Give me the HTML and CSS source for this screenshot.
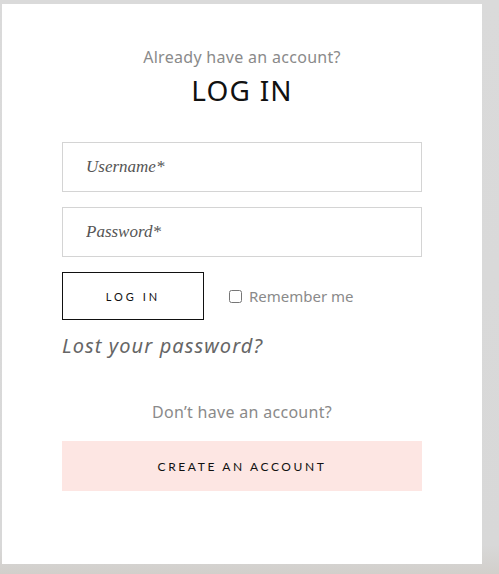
FILE: index.html
```html
<!DOCTYPE html>
<html lang="en">
<head>
    <meta charset="UTF-8">
    <meta name="viewport" content="width=device-width, initial-scale=1.0">
    <title>Log in</title>
    <link rel="stylesheet" href="styles.css">
</head>
<body>

    <div class="backdrop">
        <div class="modal">
            <p class="lead">Already have an account?</p>
            <h1 class="title">LOG IN</h1>

            <form class="login-form">
                <input type="text" class="field" placeholder="Username*">
                <input type="password" class="field" placeholder="Password*">

                <div class="actions">
                    <button type="button" class="btn-outline">LOG IN</button>
                    <label class="remember">
                        <input type="checkbox" class="check">
                        <span>Remember me</span>
                    </label>
                </div>

                <a href="#" class="lost">Lost your password?</a>
            </form>

            <p class="lead lead-bottom">Don’t have an account?</p>
            <button type="button" class="btn-pink">CREATE AN ACCOUNT</button>
        </div>
    </div>

</body>
</html>
```

FILE: styles.css
```css
/* General Styling */
body {
    margin: 0;
    font-family: 'Noto Sans', sans-serif;
    background: #d9d9d9;
}

.backdrop {
    min-height: 574px;
    padding: 4px 0 0 2px;
    box-sizing: border-box;
    background: linear-gradient(180deg, #dadada 0%, #d8d8d8 95%, #d2cfcb 100%);
}

.modal {
    width: 480px;
    height: 560px;
    box-sizing: border-box;
    padding: 43px 60px 0;
    background: #fff;
    display: flex;
    flex-direction: column;
}

/* Headings */
.lead {
    margin: 0;
    text-align: center;
    font-size: 16px;
    line-height: 20px;
    letter-spacing: 0.3px;
    color: #8a8a8a;
}

.title {
    margin: 6px 0 0;
    text-align: center;
    font-size: 28px;
    line-height: 34px;
    font-weight: 400;
    letter-spacing: 1.2px;
    color: #111;
}

/* Form */
.login-form {
    margin-top: 35px;
    display: flex;
    flex-direction: column;
    gap: 15px;
}

.field {
    height: 50px;
    box-sizing: border-box;
    border: 1px solid #d4d4d4;
    padding: 0 23px;
    font-family: 'Liberation Serif', serif;
    font-style: italic;
    font-size: 17px;
    outline: none;
}

.field::placeholder {
    color: #555;
}

.actions {
    display: flex;
    align-items: center;
    gap: 25px;
}

.btn-outline {
    width: 142px;
    height: 48px;
    background: #fff;
    border: 1px solid #111;
    font-family: 'Lato', sans-serif;
    font-size: 11px;
    letter-spacing: 3px;
    color: #111;
    cursor: pointer;
}

.remember {
    display: flex;
    align-items: center;
    gap: 7px;
    font-size: 15px;
    color: #8a8a8a;
}

.check {
    margin: 0;
    width: 13px;
    height: 13px;
}

.lost {
    margin-top: -1px;
    font-size: 20px;
    line-height: 24px;
    font-style: italic;
    letter-spacing: 1.1px;
    color: #666;
    text-decoration: none;
}

/* Bottom */
.lead-bottom {
    margin-top: 44px;
}

.btn-pink {
    margin-top: 19px;
    height: 50px;
    border: none;
    background: #fde6e3;
    font-family: 'Lato', sans-serif;
    font-size: 12px;
    letter-spacing: 2.6px;
    color: #111;
    cursor: pointer;
}
```
